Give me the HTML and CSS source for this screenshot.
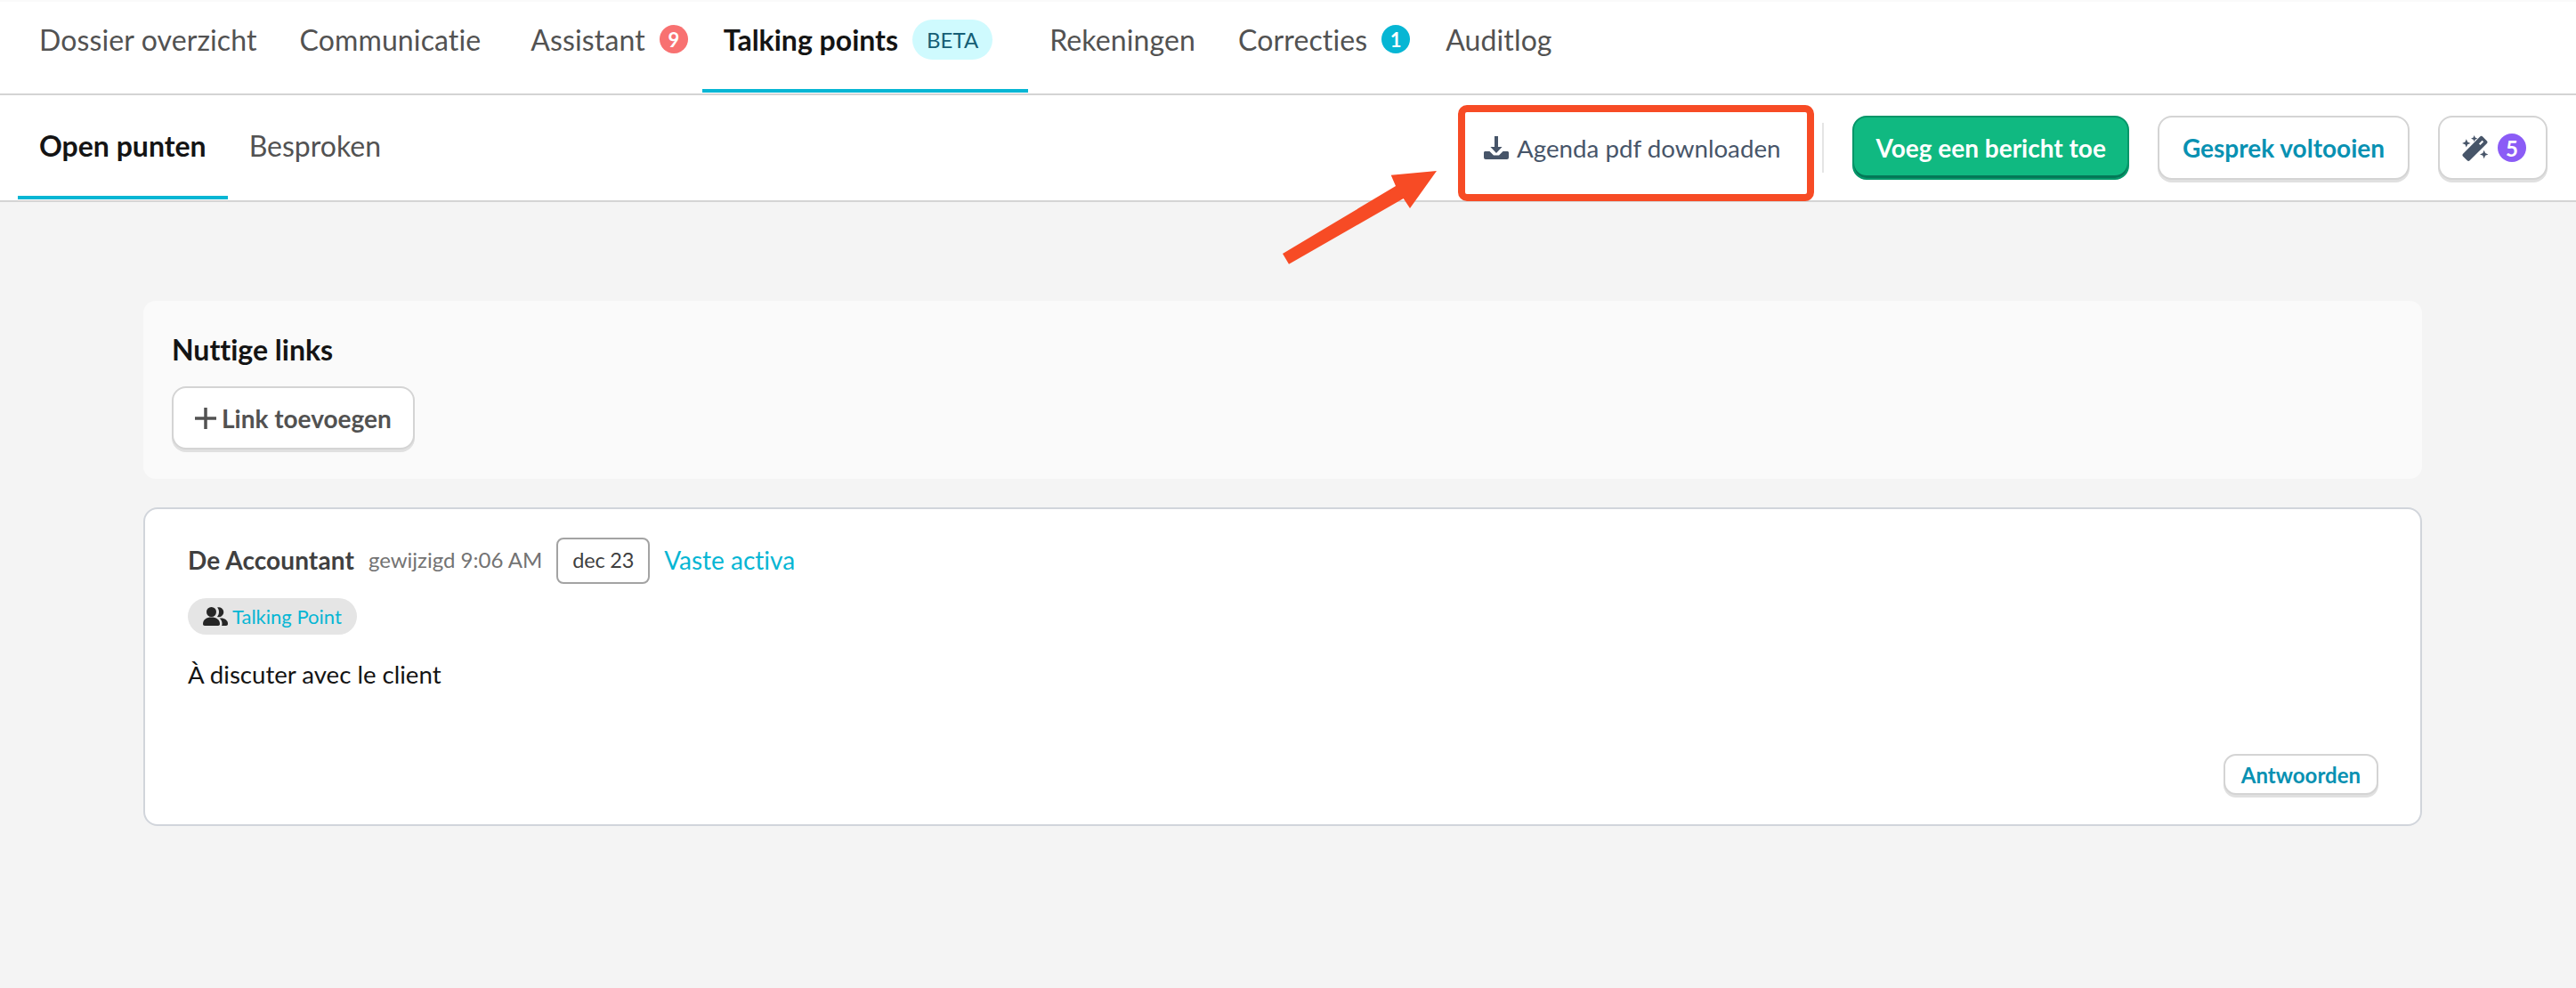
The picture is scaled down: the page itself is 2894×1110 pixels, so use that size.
FILE: index.html
```html
<!DOCTYPE html>
<html lang="nl">
<head>
<meta charset="utf-8">
<title>Talking points</title>
<link rel="stylesheet" href="styles.css">
</head>
<body>
<nav class="topnav">
  <a class="tab">Dossier overzicht</a>
  <a class="tab">Communicatie</a>
  <a class="tab tab-wide tab-badge">Assistant<span class="count count-red">9</span></a>
  <a class="tab tab-active">Talking points<span class="beta">BETA</span></a>
  <a class="tab">Rekeningen</a>
  <a class="tab tab-badge">Correcties<span class="count count-blue">1</span></a>
  <a class="tab">Auditlog</a>
</nav>
<header class="subnav">
  <div class="subtabs">
    <a class="subtab subtab-active">Open punten</a>
    <a class="subtab">Besproken</a>
  </div>
  <div class="actions">
    <a class="agenda">
      <svg class="agenda-icon" viewBox="0 0 28 28"><path d="M12 1h4v12h4.600L14 20 7.400 13H12z"/><path d="M1.500 18h5l4.500 4.500h6L21.500 18h5c.8 0 1.500.7 1.500 1.500V25a2 2 0 0 1-2 2H2a2 2 0 0 1-2-2v-5.500C0 18.700.7 18 1.500 18z"/></svg>
      Agenda pdf downloaden
    </a>
    <span class="divider"></span>
    <button class="btn btn-green">Voeg een bericht toe</button>
    <button class="btn btn-teal">Gesprek voltooien</button>
    <button class="btn btn-magic">
      <svg class="wand" viewBox="1 1 28.500 27.700"><path d="M23 2.500l4.500 4.500a2 2 0 0 1 0 2.800L9.200 28a2 2 0 0 1-2.800 0L2 23.600a2 2 0 0 1 0-2.800L20.200 2.500a2 2 0 0 1 2.800 0zM22.500 6.500l-3.500 3.500 1.500 1.500 3.500-3.500z" fill-rule="evenodd"/><path d="M5.500 5l1.300 3.200L10 9.500l-3.200 1.300L5.500 14l-1.300-3.200L1 9.500l3.200-1.300zM14 1l1 2.500 2.500 1-2.500 1-1 2.500-1-2.500-2.500-1 2.500-1zM24.500 17l1.300 3.200 3.200 1.300-3.200 1.300-1.300 3.200-1.300-3.200-3.200-1.300 3.200-1.300z"/></svg>
      <span class="count count-purple">5</span>
    </button>
  </div>
</header>
<main class="content">
  <section class="links">
    <h2 class="links-title">Nuttige links</h2>
    <button class="btn btn-add">
      <svg class="plus" viewBox="0 0 24 24"><path d="M12 0v24M0 12h24"/></svg>
      Link toevoegen
    </button>
  </section>
  <article class="card">
    <div class="meta">
      <strong class="author">De Accountant</strong>
      <span class="time">gewijzigd 9:06 AM</span>
      <span class="date">dec 23</span>
      <a class="ref">Vaste activa</a>
    </div>
    <span class="pill">
      <svg class="people" viewBox="0 0 28 21"><circle cx="9.500" cy="5.500" r="5.500"/><path d="M0 19c0-5 4-7.500 9.500-7.500S19 14 19 19c0 1.200-.8 2-2 2H2c-1.200 0-2-.8-2-2z"/><path d="M16 .6a5.500 5.500 0 1 1 0 10.400c1.300-1.500 2-3.400 2-5.400s-.7-3.600-2-5z"/><path d="M18.500 12.500c5.500-.7 9.500 2 9.500 6.500 0 1.200-.8 2-2 2h-5c.4-.7.500-1.300.5-2 0-2.700-1-4.800-3-6.500z"/></svg>
      Talking Point
    </span>
    <p class="body">À discuter avec le client</p>
    <div class="card-foot"><button class="btn btn-reply">Antwoorden</button></div>
  </article>
</main>
<div class="callout-box"></div>
<svg class="callout-arrow" viewBox="0 0 176 108"><polygon points="1,95 128,19 122.700,6.700 174,2 144,44 136.700,33 8,106.700"/></svg>
</body>
</html>
```
FILE: styles.css
```css
* { box-sizing: border-box; }
html, body { margin: 0; height: 100%; }
body {
  position: relative;
  min-height: 1110px;
  overflow: hidden;
  background: #f4f4f4;
  font-family: Lato, sans-serif;
  font-variant-ligatures: none;
  color: #141414;
}
a { display: block; }
button { font-family: inherit; cursor: pointer; font-variant-ligatures: none; }

.topnav {
  display: flex;
  height: 107px;
  padding: 0 20px;
  background: #fff;
  border-top: 2px solid #fafafa;
  border-bottom: 2px solid #d4d4d4;
}
.tab {
  display: flex;
  align-items: center;
  height: 102px;
  padding: 0 24px 14px;
  font-size: 32px;
  letter-spacing: .12px;
  color: #525252;
  border-bottom: 4px solid transparent;
}
.tab-wide { margin-left: 8px; }
.tab-badge { padding-right: 16px; }
.tab-active {
  font-weight: 700;
  letter-spacing: 0;
  color: #141414;
  border-bottom-color: #06b6d4;
}
.count {
  display: inline-flex;
  align-items: center;
  justify-content: center;
  width: 32px;
  height: 32px;
  border-radius: 50%;
  color: #fff;
  font-size: 22px;
  font-weight: 700;
  letter-spacing: 0;
}
.count-red, .count-blue { margin-left: 16px; }
.count-red { background: #f87171; }
.count-blue { background: #06b6d4; }
.count-purple { background: #8b5cf6; margin-left: 10px; font-size: 24px; }
.beta {
  display: inline-flex;
  align-items: center;
  height: 45px;
  margin-left: 16px;
  margin-right: 16px;
  padding: 0 16px;
  border-radius: 23px;
  background: #cffafe;
  color: #155e75;
  font-size: 24px;
  font-weight: 400;
}

.subnav {
  display: flex;
  justify-content: space-between;
  height: 120px;
  padding: 0 32px 0 20px;
  background: #fff;
  border-bottom: 2px solid #d4d4d4;
}
.subtabs { display: flex; }
.subtab {
  display: flex;
  align-items: center;
  height: 117px;
  padding: 0 24px;
  font-size: 32px;
  color: #525252;
  border-bottom: 4px solid transparent;
}
.subtab-active {
  font-weight: 700;
  color: #141414;
  border-bottom-color: #06b6d4;
}
.actions { display: flex; align-items: center; gap: 32px; }
.agenda {
  display: flex;
  align-items: center;
  gap: 9px;
  margin-right: 15px;
  font-size: 27.7px;
  color: #475569;
}
.agenda-icon { width: 28px; height: 28px; fill: #475569; }
.divider { width: 2px; height: 56px; background: #e5e5e5; }
.btn {
  display: inline-flex;
  align-items: center;
  border-radius: 16px;
  background: #fff;
  border: 2px solid #d4d4d4;
  box-shadow: 0 3px 0 #e0e0e0;
  font-weight: 700;
}
.btn-green {
  height: 72px;
  padding: 0 24px;
  background: #10b981;
  border-color: #059669;
  box-shadow: inset 0 -3px 0 #047857;
  color: #fff;
  font-size: 28px;
}
.btn-teal {
  height: 72px;
  padding: 0 26px;
  color: #0891b2;
  font-size: 28px;
}
.btn-magic {
  height: 72px;
  padding: 0 22px 0 25px;
}
.wand { width: 30px; height: 29px; fill: #475569; }

.content {
  display: flex;
  flex-direction: column;
  gap: 32px;
  width: 2560px;
  margin-left: 161px;
  padding-top: 111px;
}
.links {
  height: 200px;
  padding: 37px 32px 0;
  border-radius: 14px;
  background: #fafafa;
}
.links-title { margin: 0 0 23px; font-size: 32px; font-weight: 700; line-height: 36px; color: #141414; }
.btn-add {
  height: 71px;
  padding: 0 24px;
  gap: 6px;
  color: #525252;
  font-size: 28px;
}
.plus { width: 24px; height: 24px; stroke: #525252; stroke-width: 3.500; fill: none; }

.card {
  height: 358px;
  padding: 32px 47px 33px 48px;
  border: 2px solid #d1d5db;
  border-radius: 16px;
  background: #fff;
  display: flex;
  flex-direction: column;
  align-items: flex-start;
}
.meta { display: flex; align-items: center; gap: 16px; height: 52px; }
.author { padding-bottom: 3px; font-size: 28px; letter-spacing: .1px; color: #404040; }
.time { padding-bottom: 3px; font-size: 24px; color: #737373; }
.date {
  display: flex;
  align-items: center;
  height: 52px;
  padding: 0 16px 2px;
  border: 2px solid #a3a3a3;
  border-radius: 8px;
  font-size: 23.500px;
  letter-spacing: -.2px;
  color: #404040;
}
.ref { padding-bottom: 3px; font-size: 28px; color: #06b6d4; }
.pill {
  display: inline-flex;
  align-items: center;
  gap: 5px;
  height: 41px;
  margin-top: 16px;
  padding: 0 17px;
  border-radius: 21px;
  background: #e5e5e5;
  color: #06b6d4;
  font-size: 22px;
}
.people { width: 28px; height: 21px; fill: #262626; }
.body { margin: 25px 0 0; font-size: 27.600px; line-height: 40px; color: #141414; }
.card-foot { margin-top: auto; align-self: flex-end; }
.btn-reply {
  height: 46px;
  padding: 0 18px;
  border-radius: 14px;
  color: #0891b2;
  font-size: 24px;
}

.callout-box {
  position: absolute;
  left: 1638px;
  top: 118px;
  width: 400px;
  height: 108px;
  border: 8px solid #f74b25;
  border-radius: 10px;
}
.callout-arrow {
  position: absolute;
  left: 1440px;
  top: 190px;
  width: 176px;
  height: 108px;
  fill: #f74b25;
}
```
